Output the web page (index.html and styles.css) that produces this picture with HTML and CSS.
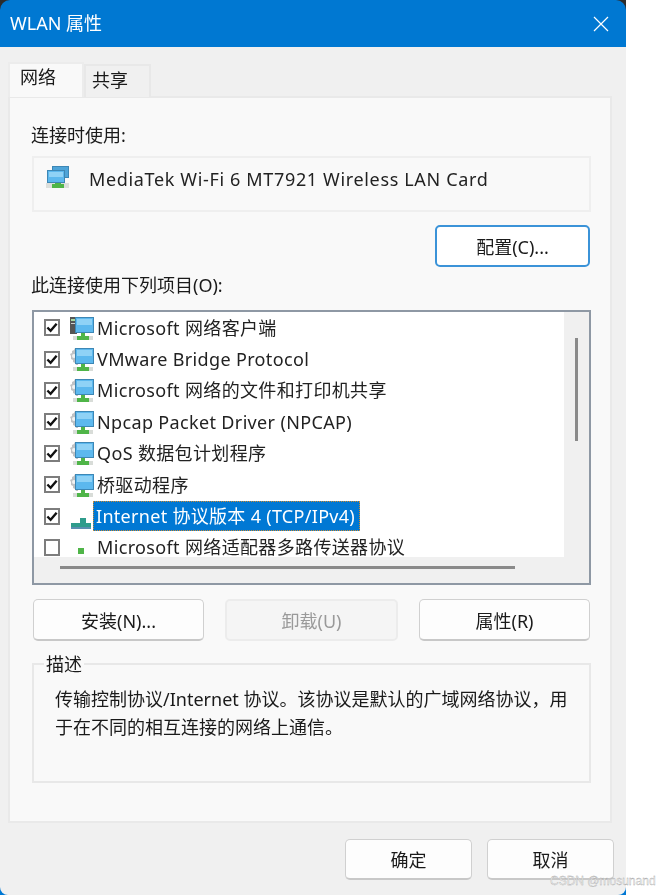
FILE: index.html
```html
<!DOCTYPE html>
<html lang="zh-CN">
<head>
<meta charset="utf-8">
<title>WLAN 属性</title>
<link rel="stylesheet" href="styles.css">
</head>
<body>
<svg class="defs" width="0" height="0" aria-hidden="true">
  <defs>
    <symbol id="screen" viewBox="0 0 26 26">
      <rect x="3" y="21" width="20" height="4" fill="#d8dcd8"/>
      <path d="M11 18h4v3h4v4H7v-4h4z" fill="#4fb548"/>
      <rect x="5.500" y="2.500" width="18" height="15" fill="#5cb8ee" stroke="#3d87b5"/>
      <rect x="7" y="4" width="15" height="6" fill="#8fd2f6"/>
    </symbol>
    <symbol id="gear" viewBox="0 0 26 26">
      <path d="M0 8l2-1V5l2-1 1-2h3v17H6l-1-2-2-1v-2l-2-1v-3z" fill="#bfc2c4"/>
      <circle cx="4" cy="10" r="2" fill="#f2f2f2"/>
    </symbol>
    <symbol id="server" viewBox="0 0 26 26">
      <rect x="0" y="2" width="7" height="17" fill="#555"/>
      <rect x="1" y="4" width="4" height="2" fill="#a8d8a0"/>
      <rect x="1" y="8" width="5" height="1" fill="#cfcfcf"/>
    </symbol>
  </defs>
</svg>
<main class="window">
  <header class="titlebar">
    <h1 class="title">WLAN 属性</h1>
    <svg class="close" width="16" height="16" viewBox="0 0 16 16"><path d="M1 1l14 14M15 1L1 15" stroke="#fff" stroke-width="1.200" fill="none"/></svg>
  </header>
  <div class="content">
    <div class="tabs">
      <div class="tab tab-active">网络</div>
      <div class="tab">共享</div>
    </div>
    <section class="panel">
      <div class="label label-top">连接时使用:</div>
      <div class="adapter">
        <svg class="adapter-icon" width="24" height="24" viewBox="0 0 24 24">
          <rect x="0" y="18" width="23" height="5" fill="#dcdfdc"/>
          <path d="M9 17h6v2h3v4H6v-4h3z" fill="#4fb548"/>
          <rect x="6.500" y="1.500" width="16" height="11" fill="#4ea4d8" stroke="#3d87b5"/>
          <rect x="1.500" y="5.500" width="17" height="12" fill="#5cb8ee" stroke="#3d87b5"/>
          <rect x="3" y="7" width="14" height="5" fill="#8fd2f6"/>
        </svg>
        <span class="adapter-name">MediaTek Wi-Fi 6 MT7921 Wireless LAN Card</span>
      </div>
      <div class="config-row"><button class="btn btn-config">配置(C)...</button></div>
      <div class="label label-list">此连接使用下列项目(O):</div>
      <div class="list">
        <ul class="items">
          <li class="item"><span class="check on"><svg width="13" height="11" viewBox="0 0 13 11"><path d="M1.500 5.500l3.500 3.500 6.500-7.500" stroke="#111" stroke-width="2.600" fill="none"/></svg></span><svg class="icon" width="26" height="26"><use href="#server"/><use href="#screen"/></svg><span class="item-text">Microsoft 网络客户端</span></li>
          <li class="item"><span class="check on"><svg width="13" height="11" viewBox="0 0 13 11"><path d="M1.500 5.500l3.500 3.500 6.500-7.500" stroke="#111" stroke-width="2.600" fill="none"/></svg></span><svg class="icon" width="26" height="26"><use href="#gear"/><use href="#screen"/></svg><span class="item-text">VMware Bridge Protocol</span></li>
          <li class="item"><span class="check on"><svg width="13" height="11" viewBox="0 0 13 11"><path d="M1.500 5.500l3.500 3.500 6.500-7.500" stroke="#111" stroke-width="2.600" fill="none"/></svg></span><svg class="icon" width="26" height="26"><use href="#gear"/><use href="#screen"/></svg><span class="item-text">Microsoft 网络的文件和打印机共享</span></li>
          <li class="item"><span class="check on"><svg width="13" height="11" viewBox="0 0 13 11"><path d="M1.500 5.500l3.500 3.500 6.500-7.500" stroke="#111" stroke-width="2.600" fill="none"/></svg></span><svg class="icon" width="26" height="26"><use href="#gear"/><use href="#screen"/></svg><span class="item-text">Npcap Packet Driver (NPCAP)</span></li>
          <li class="item"><span class="check on"><svg width="13" height="11" viewBox="0 0 13 11"><path d="M1.500 5.500l3.500 3.500 6.500-7.500" stroke="#111" stroke-width="2.600" fill="none"/></svg></span><svg class="icon" width="26" height="26"><use href="#gear"/><use href="#screen"/></svg><span class="item-text">QoS 数据包计划程序</span></li>
          <li class="item"><span class="check on"><svg width="13" height="11" viewBox="0 0 13 11"><path d="M1.500 5.500l3.500 3.500 6.500-7.500" stroke="#111" stroke-width="2.600" fill="none"/></svg></span><svg class="icon" width="26" height="26"><use href="#gear"/><use href="#screen"/></svg><span class="item-text">桥驱动程序</span></li>
          <li class="item"><span class="check on"><svg width="13" height="11" viewBox="0 0 13 11"><path d="M1.500 5.500l3.500 3.500 6.500-7.500" stroke="#111" stroke-width="2.600" fill="none"/></svg></span><svg class="icon" width="26" height="26" viewBox="0 0 26 26"><path d="M10 15h6v5h5v6H1v-6h9z" fill="#2f9c8c"/><rect x="1" y="24" width="20" height="2" fill="#5a8fb0"/></svg><span class="item-text selected">Internet 协议版本 4 (TCP/IPv4)</span></li>
          <li class="item"><span class="check"></span><svg class="icon" width="26" height="26" viewBox="0 0 26 26"><rect x="8" y="14" width="6" height="6" fill="#4fb548"/></svg><span class="item-text">Microsoft 网络适配器多路传送器协议</span></li>
        </ul>
        <div class="vscroll"><div class="vthumb"></div></div>
        <div class="hscroll"><div class="hthumb"></div></div>
      </div>
      <div class="actions">
        <button class="btn">安装(N)...</button>
        <button class="btn btn-disabled">卸载(U)</button>
        <button class="btn">属性(R)</button>
      </div>
      <fieldset class="desc">
        <legend class="desc-title">描述</legend>
        <p class="desc-text">传输控制协议/Internet 协议。该协议是默认的广域网络协议，用<br>于在不同的相互连接的网络上通信。</p>
      </fieldset>
    </section>
    <footer class="footer">
      <button class="btn btn-footer">确定</button>
      <button class="btn btn-footer">取消</button>
    </footer>
  </div>
</main>
<div class="watermark">CSDN @mosunand</div>
</body>
</html>
```

FILE: styles.css
```css
* { box-sizing: border-box; }
html, body { margin: 0; padding: 0; height: 100%; background: #fff; }
body {
  position: relative;
  overflow: hidden;
  font-family: "Noto Sans", "Noto Sans CJK SC", sans-serif;
  font-size: 18px;
  color: #1a1a1a;
}
.defs { position: absolute; }
.window {
  width: 626px;
  height: 895px;
  display: flex;
  flex-direction: column;
  background: linear-gradient(#2c2c2c 50%, #0078d4 50%);
  filter: blur(0.45px);
}
.titlebar {
  height: 47px;
  flex: none;
  background: #0078d2;
  border-radius: 10px 10px 0 0;
  display: flex;
  align-items: center;
  justify-content: space-between;
  padding: 0 17px 3px 10px;
  color: #fff;
}
.title { margin: 0; font-size: 18px; font-weight: 400; }
.close { margin-top: 3px; }
.content {
  flex: 1;
  background: #f0f0f0;
  border-radius: 0 0 8px 8px;
  padding: 15px 14px 0 8px;
  display: flex;
  flex-direction: column;
}
.tabs { display: flex; align-items: flex-end; height: 35px; position: relative; z-index: 1; margin-bottom: -1px; }
.tab {
  width: 67px;
  height: 33px;
  border: 2px solid #e8e8e8;
  border-bottom: 0;
  background: #f0f0f0;
  display: flex;
  align-items: center;
  padding: 0 0 6px 6px;
}
.tab-active {
  width: 76px;
  height: 35px;
  background: #f9f9f9;
  border-color: #ececec;
  padding: 0 0 10px 10px;
}
.panel {
  height: 727px;
  background: #f9f9f9;
  border: 2px solid #e9e9e9;
  padding: 0 19px 0 22px;
  display: flex;
  flex-direction: column;
}
.label { line-height: 24px; margin-left: -1px; }
.label-top { margin-top: 25px; }
.adapter {
  height: 56px;
  margin-top: 9px;
  border: 2px solid #efefef;
  display: flex;
  align-items: flex-start;
  padding: 7px 0 0 12px;
}
.adapter-icon { flex: none; }
.adapter-name { margin: 2px 0 0 19px; white-space: nowrap; letter-spacing: 0.65px; color: #222; }
.config-row { display: flex; justify-content: flex-end; margin-top: 13px; padding-right: 1px; }
.btn {
  font: inherit;
  color: #1a1a1a;
  height: 42px;
  background: #fdfdfd;
  border: 1px solid #d0d0d0;
  border-bottom: 2px solid #c8c8c8;
  border-radius: 5px;
  padding: 0;
}
.btn-config { width: 155px; background: #fff; border: 2px solid #3b93d8; }
.label-list { margin-top: 6px; }
.list {
  margin-top: 13px;
  height: 275px;
  border: 2px solid #8e98a4;
  background: #f0f0f0;
  display: grid;
  grid-template-columns: 1fr 25px;
  grid-template-rows: 1fr 26px;
}
.items {
  list-style: none;
  margin: 0;
  padding: 0 0 0 10px;
  background: #fff;
  overflow: hidden;
}
.item { display: flex; align-items: center; height: 31.4px; white-space: nowrap; }
.check {
  width: 16px;
  height: 17px;
  flex: none;
  border: 2px solid #7d7d7d;
  background: #fff;
  display: flex;
  align-items: center;
  justify-content: center;
}
.icon { flex: none; margin: 0 0 0 10px; }
.item-text { margin-left: -2px; line-height: 28px; padding: 1px 3px; letter-spacing: 0.35px; color: #222; }
.selected { background: #0078d4; color: #fff; outline: 1px dotted #d08a30; outline-offset: -1px; margin-left: -3px; padding: 1px 5px 1px 3px; letter-spacing: 0.3px; }
.vscroll { display: flex; justify-content: center; padding-top: 26px; }
.vthumb { width: 3px; height: 103px; background: #8a8a8a; }
.hscroll { grid-column: 1 / -1; padding: 9px 0 0 26px; }
.hthumb { width: 455px; height: 3px; background: #8a8a8a; }
.actions { display: flex; gap: 21px; margin-top: 14px; padding: 0 1px; }
.actions .btn { flex: 1; }
.btn-disabled { background: #f5f5f5; color: #9a9a9a; border: 2px solid #ececec; }
.desc {
  margin: 11px 0 0;
  padding: 0 21px;
  height: 131px;
  border: 2px solid #e8e8e8;
  min-width: 0;
}
.desc-title { padding: 0 2px; margin-left: -11px; line-height: 24px; }
.desc-text { margin: 9px 0 0; line-height: 28px; white-space: nowrap; }
.footer { display: flex; justify-content: flex-end; gap: 15px; margin-top: 16px; margin-right: -2px; }
.btn-footer { width: 127px; height: 41px; }
.watermark {
  position: absolute;
  left: 550px;
  top: 873px;
  font-family: "Liberation Sans", sans-serif;
  font-size: 12px;
  line-height: 17px;
  color: #f4f4f4;
  -webkit-text-stroke: 0.3px #a0a0a0;
  white-space: nowrap;
}
```
